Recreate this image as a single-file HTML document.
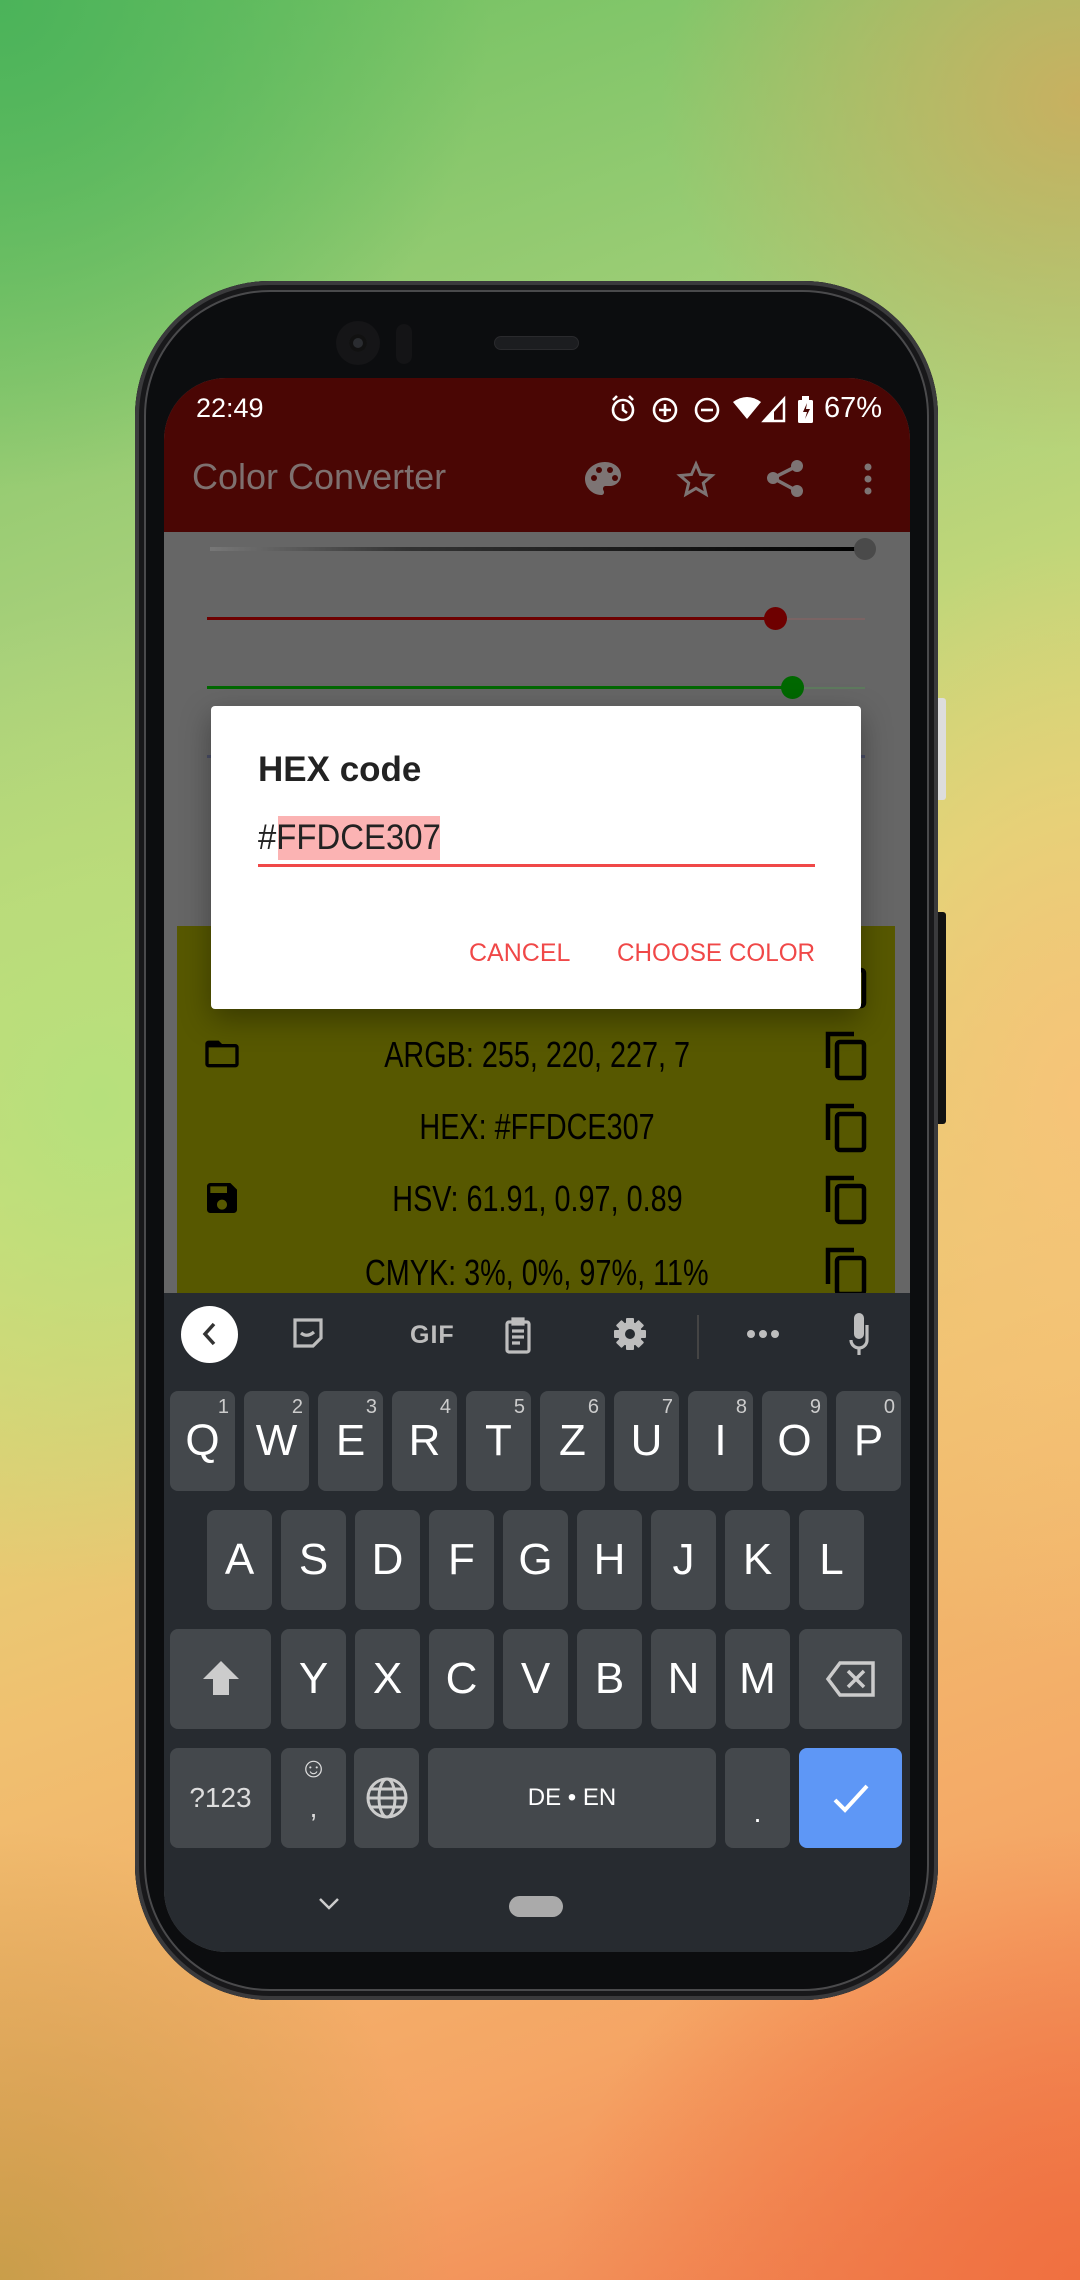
<!DOCTYPE html>
<html><head><meta charset="utf-8"><style>
*{margin:0;padding:0;box-sizing:border-box}
body{width:1080px;height:2280px;overflow:hidden;position:relative;font-family:"Liberation Sans",sans-serif;
background:
radial-gradient(ellipse 700px 700px at 0px 0px,#4bb35a,transparent 70%),
radial-gradient(ellipse 600px 500px at 1080px 100px,#c8b060,transparent 70%),
radial-gradient(ellipse 600px 700px at 100px 1100px,#b6e07c,transparent 70%),
radial-gradient(ellipse 500px 800px at 1080px 1100px,#f6c478,transparent 70%),
radial-gradient(ellipse 700px 600px at 1080px 2280px,#f07040,transparent 75%),
radial-gradient(ellipse 600px 600px at 0px 2280px,#c99e4a,transparent 75%),
linear-gradient(160deg,#6cc060 0%,#a8d07a 25%,#d8dc78 45%,#f0c070 65%,#f5a565 85%,#f08050 100%);}
.abs{position:absolute}
.phone{left:135px;top:281px;width:803px;height:1719px;border-radius:135px;background:#0c0d0f;
box-shadow:inset 0 0 0 4px #3a3a3c,inset 0 0 0 9px #18181a,inset 0 0 0 11px #4a4a4c;}
.screen{left:164px;top:378px;width:746px;height:1574px;border-radius:62px;overflow:hidden;background:#666}
.key{position:absolute;width:65px;height:100px;background:#44484c;border-radius:8px;color:#fff;font-size:44px;text-align:center;line-height:100px}
.key sup{position:absolute;right:6px;top:-34px;font-size:20px;color:#ccc}
.row{position:absolute;left:0;width:100%;text-align:center;font-size:36px;color:#000;}
.row span{display:inline-block;transform:scaleX(.8)}
</style></head><body>
<div class="abs" style="left:938px;top:698px;width:8px;height:102px;background:#ddd;border-radius:0 3px 3px 0"></div>
<div class="abs" style="left:938px;top:912px;width:8px;height:212px;background:#111;border-radius:0 3px 3px 0"></div>
<div class="abs phone"></div>
<div class="abs" style="left:336px;top:321px;width:44px;height:44px;border-radius:50%;background:#151517"></div>
<div class="abs" style="left:349px;top:334px;width:18px;height:18px;border-radius:50%;background:#2a2c30;box-shadow:inset 0 0 0 4px #111"></div>
<div class="abs" style="left:396px;top:324px;width:16px;height:40px;border-radius:8px;background:#141416"></div>
<div class="abs" style="left:494px;top:336px;width:85px;height:14px;border-radius:7px;background:#1c1d20;border:1px solid #2a2a2d"></div>

<div class="abs screen">
 <div class="abs" style="left:0;top:0;width:746px;height:154px;background:#4a0604"></div>
 <div class="abs" style="left:32px;top:6px;color:#fff;font-size:27px;line-height:48px">22:49</div>
 <svg class="abs" style="left:440px;top:10px" width="240" height="40" viewBox="0 0 240 40">
  <g fill="none" stroke="#fff" stroke-width="2.6">
   <circle cx="19" cy="22" r="10"/><path d="M19 16v6l4 3M9 12l4-4M29 12l-4-4"/>
   <circle cx="61" cy="22" r="11"/><path d="M61 16v12M55 22h12"/>
   <circle cx="103" cy="22" r="11"/><path d="M97 22h12"/>
  </g>
  <path d="M129 14q14-10 28 0l-14 17z" fill="#fff"/>
  <path d="M160 33l20-22v22z" fill="none" stroke="#fff" stroke-width="2.5"/><path d="M160 33l10-11v11z" fill="#fff"/>
  <rect x="194" y="12" width="15" height="23" rx="1.5" fill="#fff"/><rect x="198" y="8" width="7" height="4" fill="#fff"/>
  <path d="M203 15l-4 9h4l-2 7 5-10h-4z" fill="#4a0604"/>
 </svg>
 <div class="abs" style="left:660px;top:6px;color:#fff;font-size:29px;line-height:48px">67%</div>
 <div class="abs" style="left:28px;top:74px;color:#7e706f;font-size:36px;line-height:50px">Color Converter</div>
 <svg class="abs" style="left:400px;top:74px" width="340" height="52" viewBox="0 0 340 52">
  <path d="M41 10c-11 0-20 8-20 17 0 9 8 16 16 16 2 0 3-1 3-3 0-1-1-2-1-3 0-2 1-3 3-3h4c6 0 11-5 11-11C57 16 50 10 41 10z" fill="#7d7474"/>
  <g fill="#4a0604"><circle cx="30" cy="26" r="3"/><circle cx="35" cy="18" r="3"/><circle cx="46" cy="18" r="3"/><circle cx="51" cy="26" r="3"/></g>
  <path d="M132 12l4.5 10.5 11.5 1-8.7 7.5 2.7 11.3-10-6-10 6 2.7-11.3-8.7-7.5 11.5-1z" fill="none" stroke="#7d7474" stroke-width="3"/>
  <g fill="#7d7474"><circle cx="233" cy="14" r="6"/><circle cx="209" cy="26" r="6"/><circle cx="233" cy="39" r="6"/></g>
  <path d="M233 14l-24 12 24 13" stroke="#7d7474" stroke-width="3.5" fill="none"/>
  <g fill="#7d7474"><circle cx="304" cy="15" r="3.5"/><circle cx="304" cy="27" r="3.5"/><circle cx="304" cy="39" r="3.5"/></g>
 </svg>
 <div class="abs" style="left:46px;top:169px;width:655px;height:4px;background:linear-gradient(90deg,#777,#333 30%,#000)"></div>
 <div class="abs" style="left:690px;top:160px;width:22px;height:22px;border-radius:50%;background:#4a4a4a"></div>
 <div class="abs" style="left:43px;top:239px;width:568px;height:3px;background:#6e0000"></div>
 <div class="abs" style="left:611px;top:240px;width:90px;height:2px;background:#7a6464"></div>
 <div class="abs" style="left:600px;top:229px;width:23px;height:23px;border-radius:50%;background:#6e0000"></div>
 <div class="abs" style="left:43px;top:308px;width:585px;height:3px;background:#006800"></div>
 <div class="abs" style="left:628px;top:309px;width:73px;height:2px;background:#5e7a5e"></div>
 <div class="abs" style="left:617px;top:298px;width:23px;height:23px;border-radius:50%;background:#006800"></div>
 <div class="abs" style="left:43px;top:377px;width:658px;height:3px;background:#4a4e66"></div>
 <div class="abs" style="left:13px;top:548px;width:718px;height:380px;background:#575800"></div>
 <svg class="abs" style="left:38px;top:656px" width="40" height="40" viewBox="0 0 24 24"><path d="M10 4H4c-1.1 0-2 .9-2 2v12c0 1.1.9 2 2 2h16c1.1 0 2-.9 2-2V8c0-1.1-.9-2-2-2h-8l-2-2zm10 14H4V8h16v10z" fill="#000"/></svg>
 <svg class="abs" style="left:38px;top:800px" width="40" height="40" viewBox="0 0 24 24"><path d="M17 3H5c-1.1 0-2 .9-2 2v14c0 1.1.9 2 2 2h14c1.1 0 2-.9 2-2V7l-4-4zm-5 16c-1.66 0-3-1.34-3-3s1.34-3 3-3 3 1.34 3 3-1.34 3-3 3zm3-10H5V5h10v4z" fill="#000"/></svg>
 <svg class="abs" style="left:660px;top:580px" width="46" height="360" viewBox="0 0 46 360">
  <g fill="none" stroke="#000" stroke-width="4.5">
   <path d="M4 38V4h26"/><rect x="13" y="12" width="27" height="36" rx="3"/>
   <path d="M4 110V76h26"/><rect x="13" y="84" width="27" height="36" rx="3"/>
   <path d="M4 182V148h26"/><rect x="13" y="156" width="27" height="36" rx="3"/>
   <path d="M4 254V220h26"/><rect x="13" y="228" width="27" height="36" rx="3"/>
   <path d="M4 326V292h26"/><rect x="13" y="300" width="27" height="36" rx="3"/>
  </g>
 </svg>
 <div class="row" style="top:654px;line-height:46px"><span>ARGB: 255, 220, 227, 7</span></div>
 <div class="row" style="top:726px;line-height:46px"><span>HEX: #FFDCE307</span></div>
 <div class="row" style="top:798px;line-height:46px"><span>HSV: 61.91, 0.97, 0.89</span></div>
 <div class="row" style="top:872px;line-height:46px"><span>CMYK: 3%, 0%, 97%, 11%</span></div>
 <div class="abs" style="left:47px;top:328px;width:650px;height:303px;background:#fff;border-radius:4px;box-shadow:0 10px 30px rgba(0,0,0,.35)">
  <div class="abs" style="left:47px;top:42px;font-size:35px;color:#222;font-weight:bold;line-height:44px">HEX code</div>
  <div class="abs" style="left:67px;top:110px;width:162px;height:44px;background:#fbb3b3"></div>
  <div class="abs" style="left:47px;top:108px;font-size:35px;color:#222;line-height:48px;transform:scaleX(.94);transform-origin:left">#FFDCE307</div>
  <div class="abs" style="left:47px;top:158px;width:557px;height:3px;background:#f04848"></div>
  <div class="abs" style="left:258px;top:229px;font-size:25px;color:#f04848;line-height:36px">CANCEL</div>
  <div class="abs" style="left:406px;top:229px;font-size:25px;color:#f04848;line-height:36px;transform:scaleX(.97);transform-origin:left">CHOOSE COLOR</div>
 </div>
 <div class="abs" style="left:0;top:915px;width:746px;height:660px;background:#272b30"></div>
 <div class="abs" style="left:17px;top:928px;width:57px;height:57px;border-radius:50%;background:#fff"></div>
 <svg class="abs" style="left:0;top:915px" width="746" height="80" viewBox="0 0 746 80">
  <path d="M50 31l-9 10 9 10" stroke="#333" stroke-width="3.5" fill="none"/>
  <g fill="none" stroke="#bdbdbd" stroke-width="3.2">
   <path d="M131 27h26v18l-8 8h-18z"/><path d="M137 40q6 5 13-1"/>
   <rect x="343" y="29" width="22" height="30" rx="2"/><path d="M349 26h10v5h-10zM348 38h12M348 44h12M348 50h8"/>
   <path d="M703 32v15a8 8 0 0 1-16 0"/><path d="M695 55v7"/>
  </g>
  <text x="246" y="50" font-family="Liberation Sans" font-weight="bold" font-size="25" letter-spacing="1" fill="#bdbdbd">GIF</text>
  <g fill="#bdbdbd" transform="translate(466 41)">
   <rect x="-4" y="-16" width="8" height="32" rx="1"/>
   <rect x="-4" y="-16" width="8" height="32" rx="1" transform="rotate(45)"/>
   <rect x="-4" y="-16" width="8" height="32" rx="1" transform="rotate(90)"/>
   <rect x="-4" y="-16" width="8" height="32" rx="1" transform="rotate(135)"/>
   <circle r="12"/>
  </g>
  <circle cx="466" cy="41" r="5" fill="#272b30"/>
  <rect x="533" y="22" width="2" height="44" fill="#444"/>
  <g fill="#bdbdbd"><circle cx="587" cy="41" r="4"/><circle cx="599" cy="41" r="4"/><circle cx="611" cy="41" r="4"/><rect x="690" y="20" width="10" height="26" rx="5"/></g>
 </svg>
 <div style="position:absolute;left:6px;top:1013px">
  <div class="key" style="left:0">Q<sup>1</sup></div>
  <div class="key" style="left:74px">W<sup>2</sup></div>
  <div class="key" style="left:148px">E<sup>3</sup></div>
  <div class="key" style="left:222px">R<sup>4</sup></div>
  <div class="key" style="left:296px">T<sup>5</sup></div>
  <div class="key" style="left:370px">Z<sup>6</sup></div>
  <div class="key" style="left:444px">U<sup>7</sup></div>
  <div class="key" style="left:518px">I<sup>8</sup></div>
  <div class="key" style="left:592px">O<sup>9</sup></div>
  <div class="key" style="left:666px">P<sup>0</sup></div>
 </div>
 <div style="position:absolute;left:43px;top:1132px">
  <div class="key" style="left:0">A</div><div class="key" style="left:74px">S</div><div class="key" style="left:148px">D</div>
  <div class="key" style="left:222px">F</div><div class="key" style="left:296px">G</div><div class="key" style="left:370px">H</div>
  <div class="key" style="left:444px">J</div><div class="key" style="left:518px">K</div><div class="key" style="left:592px">L</div>
 </div>
 <div style="position:absolute;left:6px;top:1251px">
  <div class="key" style="left:0;width:101px"><svg width="44" height="44" viewBox="0 0 44 44" style="margin-top:28px"><path d="M22 4L4 22h10v16h16V22h10z" fill="#ccc"/></svg></div>
  <div class="key" style="left:111px">Y</div><div class="key" style="left:185px">X</div><div class="key" style="left:259px">C</div>
  <div class="key" style="left:333px">V</div><div class="key" style="left:407px">B</div><div class="key" style="left:481px">N</div><div class="key" style="left:555px">M</div>
  <div class="key" style="left:629px;width:103px"><svg width="54" height="44" viewBox="0 0 54 44" style="margin-top:28px"><path d="M16 6h33v32H16L4 22z" fill="none" stroke="#ccc" stroke-width="3.5"/><path d="M24 14l16 16M40 14L24 30" stroke="#ccc" stroke-width="3.5"/></svg></div>
 </div>
 <div style="position:absolute;left:6px;top:1370px">
  <div class="key" style="left:0;width:101px;font-size:28px;color:#ddd">?123</div>
  <div class="key" style="left:111px;font-size:28px;line-height:40px;color:#ddd">☺<br>,</div>
  <div class="key" style="left:184px"><svg width="44" height="44" viewBox="0 0 44 44" style="margin-top:28px"><g fill="none" stroke="#ccc" stroke-width="3"><circle cx="22" cy="22" r="19"/><ellipse cx="22" cy="22" rx="8" ry="19"/><path d="M3 22h38M6 13h32M6 31h32"/></g></svg></div>
  <div class="key" style="left:258px;width:288px;font-size:24px">DE • EN</div>
  <div class="key" style="left:555px;font-size:28px;line-height:130px">.</div>
  <div class="key" style="left:629px;width:103px;background:#5e97f6"><svg width="40" height="40" viewBox="0 0 40 40" style="margin-top:30px"><path d="M4 22l10 10L36 8" fill="none" stroke="#fff" stroke-width="4"/></svg></div>
 </div>
 <svg class="abs" style="left:150px;top:1515px" width="30" height="20" viewBox="0 0 30 20"><path d="M6 6l9 9 9-9" fill="none" stroke="#ccc" stroke-width="2.5"/></svg>
 <div class="abs" style="left:345px;top:1518px;width:54px;height:21px;border-radius:11px;background:#aaa"></div>
</div>
</body></html>
